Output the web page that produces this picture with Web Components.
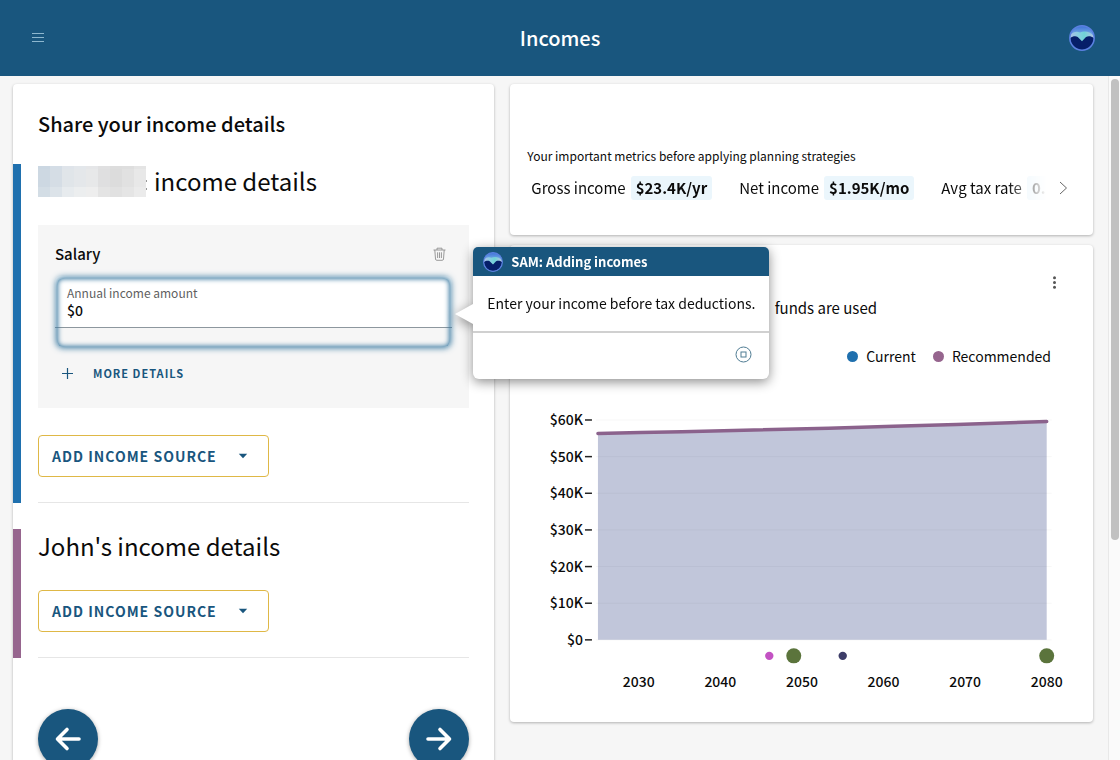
<!DOCTYPE html>
<html lang="en">
<head>
<meta charset="utf-8">
<meta name="viewport" content="width=device-width, initial-scale=1">
<title>Incomes</title>
<style>
  html, body {
    height: 100%;
    margin: 0;
  }

  body {
    background: #f6f6f6;
    color: #0b0b0b;
    font-family: "Noto Sans CJK SC", "Noto Sans", sans-serif;
    font-size: 14px;
    --blue: #19567e;
    --current: #1f70ae;
    --recommended: #96658e;
  }
</style>
</head>
<body>

<app-shell>
  <app-header slot="header" title="Incomes"></app-header>

  <card-box slot="left">
    <income-form>
      <income-section color="current" heading="income details" masked>
        <income-source name="Salary" label="Annual income amount" value="$0">
          <help-tip title="SAM: Adding incomes">Enter your income before tax deductions.</help-tip>
        </income-source>
      </income-section>
      <income-section color="recommended" heading="John's income details"></income-section>
    </income-form>
  </card-box>

  <card-box slot="right">
    <metrics-bar></metrics-bar>
  </card-box>
  <card-box slot="right">
    <funds-chart></funds-chart>
  </card-box>
</app-shell>

<script>
class AppShell extends HTMLElement {
  constructor() {
    super()
    this.attachShadow({ mode: 'open' }).innerHTML =
      /*html*/
      `
      <style>
        :host {
          display: flex;
          flex-direction: column;
          height: 100vh;
          overflow: hidden;
        }
        .body {
          display: flex;
          flex: 1;
          min-height: 0;
        }
        main {
          flex: 1;
          display: grid;
          grid-template-columns: minmax(0, 19fr) minmax(0, 23fr);
          align-items: start;
          gap: 16px;
          padding: 8px 15px 0 13px;
          min-width: 0;
        }
        .left {
          position: relative;
          z-index: 1;
        }
        .right {
          display: grid;
          grid-template-columns: minmax(0, 1fr);
          gap: 10px;
        }
        .rail {
          box-sizing: border-box;
          width: 12px;
          padding: 3px 1px;
          background: #fafafa;
          border-left: 1px solid #e8e8e8;
        }
        .thumb {
          height: 68%;
          margin-left: 1px;
          border-radius: 4px;
          background: #c1c1c1;
        }
      </style>
      <slot name="header"></slot>
      <div class="body">
        <main>
          <div class="left"><slot name="left"></slot></div>
          <div class="right"><slot name="right"></slot></div>
        </main>
        <div class="rail"><div class="thumb"></div></div>
      </div>
      `
  }
}
customElements.define('app-shell', AppShell)


// round wave logo, used in the header and in the help tip
class SamLogo extends HTMLElement {
  constructor() {
    super()
    this.attachShadow({ mode: 'open' }).innerHTML =
      /*html*/
      `
      <style>
        :host {
          display: block;
          width: 26px;
          height: 26px;
        }
        svg {
          display: block;
          width: 100%;
          height: 100%;
        }
      </style>
      <svg viewBox="0 0 26 26" aria-hidden="true">
        <defs>
          <linearGradient id="sky" x1="0" y1="0" x2="0" y2="1">
            <stop offset="0" stop-color="#3f72d8"/>
            <stop offset=".4" stop-color="#79b4e6"/>
          </linearGradient>
          <linearGradient id="wave" x1="0" y1="0" x2="1" y2="0">
            <stop offset="0" stop-color="#a9bfe8"/>
            <stop offset=".35" stop-color="#86cfe0"/>
            <stop offset=".6" stop-color="#6fd3d6"/>
            <stop offset="1" stop-color="#b4c2e2"/>
          </linearGradient>
        </defs>
        <circle cx="13" cy="13" r="12.200" fill="url(#sky)"/>
        <path d="M1.500 10C4.500 6.500 8 6 11 7.500 15 5.500 21 6 24.500 11V14L13 17 1.500 14Z" fill="url(#wave)"/>
        <path d="M1.200 13.200C3.500 11.300 6.500 10.800 8.700 12L13 16.300 17 12C19.500 10.800 22.500 11.300 24.800 13.200A11.800 11.800 0 0 1 1.200 13.200Z" fill="#061f69"/>
        <circle cx="13" cy="13" r="12.200" fill="none" stroke="#5a80e0" stroke-width="1.500"/>
      </svg>
      `
  }
}
customElements.define('sam-logo', SamLogo)


class AppHeader extends HTMLElement {
  connectedCallback() {
    this.attachShadow({ mode: 'open' }).innerHTML =
      /*html*/
      `
      <style>
        :host {
          display: block;
          background: var(--blue);
          color: #fff;
        }
        header {
          display: grid;
          grid-template-columns: 1fr auto 1fr;
          align-items: center;
          height: 76px;
          padding: 0 25px;
        }
        h1 {
          margin: 0;
          font-size: 20px;
          line-height: 28px;
          font-weight: 500;
        }
        button {
          display: block;
          padding: 6px;
          border: 0;
          background: none;
          cursor: pointer;
        }
        .account {
          justify-self: end;
          padding: 0;
        }
        svg {
          display: block;
        }
      </style>
      <header>
        <button aria-label="Menu">
          <svg width="14" height="14" viewBox="0 0 14 14" fill="none" stroke="#8db7cf">
            <path d="M1 2.500H13M1 6.500H13M1 10.500H13"/>
          </svg>
        </button>
        <h1>${this.getAttribute('title')}</h1>
        <button class="account" aria-label="Account"><sam-logo></sam-logo></button>
      </header>
      `
  }
}
customElements.define('app-header', AppHeader)


class CardBox extends HTMLElement {
  constructor() {
    super()
    this.attachShadow({ mode: 'open' }).innerHTML =
      /*html*/
      `
      <style>
        :host {
          display: block;
          background: #fff;
          border-radius: 4px;
          box-shadow: 0 1px 3px rgba(0, 0, 0, .28);
        }
      </style>
      <slot></slot>
      `
  }
}
customElements.define('card-box', CardBox)


class IncomeForm extends HTMLElement {
  constructor() {
    super()
    this.attachShadow({ mode: 'open' }).innerHTML =
      /*html*/
      `
      <style>
        :host {
          display: block;
          padding: 26px 0;
        }
        h2 {
          margin: 0 25px 26px;
          font-size: 20px;
          line-height: 28px;
          font-weight: 500;
        }
        .sections {
          display: grid;
          gap: 26px;
        }
        nav {
          display: flex;
          justify-content: space-between;
          margin: 51px 25px 0;
        }
        nav button {
          display: grid;
          place-items: center;
          width: 60px;
          height: 60px;
          padding: 0;
          border: 0;
          border-radius: 50%;
          background: var(--blue);
          box-shadow: 0 1px 4px rgba(0, 0, 0, .35);
          cursor: pointer;
        }
      </style>
      <h2>Share your income details</h2>
      <div class="sections"><slot></slot></div>
      <nav>
        <button aria-label="Back">
          <svg width="28" height="28" viewBox="0 0 28 28" fill="none" stroke="#fff" stroke-width="3.600" stroke-linecap="round" stroke-linejoin="round">
            <path d="M25 14H4M13 4.500 3.500 14 13 23.500"/>
          </svg>
        </button>
        <button aria-label="Next">
          <svg width="28" height="28" viewBox="0 0 28 28" fill="none" stroke="#fff" stroke-width="3.600" stroke-linecap="round" stroke-linejoin="round">
            <path d="M3 14H24M15 4.500 24.500 14 15 23.500"/>
          </svg>
        </button>
      </nav>
      `
  }
}
customElements.define('income-form', IncomeForm)


class IncomeSection extends HTMLElement {
  connectedCallback() {
    this.attachShadow({ mode: 'open' }).innerHTML =
      /*html*/
      `
      <style>
        :host {
          display: block;
          border-left: 8px solid var(--${this.getAttribute('color')});
          padding: 0 25px 0 17px;
        }
        h3 {
          display: flex;
          align-items: center;
          gap: 7px;
          margin: 0 0 27px;
          font-size: 24px;
          line-height: 34px;
          font-weight: 400;
        }
        ::slotted(*) {
          margin-bottom: 27px;
        }
        .add {
          display: flex;
          align-items: center;
          gap: 21px;
          height: 42px;
          padding: 0 20px 0 13px;
          border: 1px solid #dfb846;
          border-radius: 4px;
          background: #fff;
          color: var(--blue);
          font: 700 14px/20px "Noto Sans CJK SC", sans-serif;
          letter-spacing: 1px;
          cursor: pointer;
        }
        hr {
          height: 1px;
          margin: 25px 0 0;
          border: 0;
          background: #e6e6e6;
        }
      </style>
      <h3>${this.hasAttribute('masked') ? this.mask() : ''}${this.getAttribute('heading')}</h3>
      <slot></slot>
      <button class="add">ADD INCOME SOURCE
        <svg width="10" height="6" viewBox="0 0 10 6" fill="currentColor"><path d="M.8.800H9.200L5 5.200Z"/></svg>
      </button>
      <hr>
      `
  }

  // pixelated name
  mask() {
    const rows = [
      ['#cbd7e2', '#d4dde6', '#dfe4ea', '#e3e7eb', '#e5e6e8', '#e0e0e1', '#dddddd', '#dedede', '#e4e4e4'],
      ['#cdd8e2', '#d5dde5', '#e0e5e9', '#e4e7ea', '#e7e8e9', '#dfdfe0', '#dcdcdc', '#e1e1e1', '#e8e8e8'],
      ['#d3dde5', '#dce3e9', '#e7ebee', '#eceeef', '#eeeeee', '#e4e4e4', '#e1e1e1', '#e5e5e5', '#ebebeb']
    ]
    const y = [0, 3, 21, 31]
    let rects = ''
    rows.forEach((row, r) => {
      row.forEach((fill, c) => {
        rects += `<rect x="${c * 12}" y="${y[r]}" width="12" height="${y[r + 1] - y[r]}" fill="${fill}"/>`
      })
    })
    return `<svg width="109" height="31" viewBox="0 0 109 31" shape-rendering="crispEdges" aria-hidden="true">
      ${rects}<path d="M108 14h1v2h-1zM108 22h1v2h-1z" fill="#999"/></svg>`
  }
}
customElements.define('income-section', IncomeSection)


class IncomeSource extends HTMLElement {
  connectedCallback() {
    this.attachShadow({ mode: 'open' }).innerHTML =
      /*html*/
      `
      <style>
        :host {
          display: block;
          padding: 17px 17px 25px;
          background: #f6f6f6;
        }
        .top {
          display: flex;
          justify-content: space-between;
          align-items: center;
          padding-right: 6px;
        }
        h4 {
          margin: 0;
          font-size: 15px;
          line-height: 24px;
          font-weight: 500;
        }
        button {
          padding: 0;
          border: 0;
          background: none;
          cursor: pointer;
        }
        svg {
          display: block;
        }
        .field {
          position: relative;
          margin-top: 10px;
          height: 73px;
        }
        .box {
          border-bottom: 1px solid #8d979e;
          background: #fff;
          border-radius: 6px 6px 0 0;
          padding: 9px 12px 8px;
        }
        label {
          display: block;
          color: #5f5f5f;
          font-size: 12px;
          line-height: 16px;
        }
        input {
          display: block;
          width: 100%;
          height: 18px;
          padding: 0;
          border: 0;
          outline: 0;
          background: none;
          color: inherit;
          font: 500 14px/18px "Noto Sans CJK SC", sans-serif;
        }
        /* focus ring drawn over the whole field */
        .ring {
          position: absolute;
          inset: 2px;
          border-radius: 6px;
          box-shadow: 0 0 6px 1px #3d7ca3, inset 0 0 5px 1px #3d7ca3;
          pointer-events: none;
        }
        .more {
          display: flex;
          align-items: center;
          gap: 20px;
          margin-top: 14px;
          padding-left: 7px;
          color: var(--blue);
          font: 700 11px/20px "Noto Sans CJK SC", sans-serif;
          letter-spacing: 1px;
        }
      </style>
      <div class="top">
        <h4>${this.getAttribute('name')}</h4>
        <button aria-label="Delete">
          <svg width="13" height="14" viewBox="0 0 13 14" fill="none" stroke="#8e8e8e" stroke-width=".9" stroke-linejoin="round">
            <path d="M.500 3H12.500M4 3V1.200H9V3M1.800 3 2.500 12Q2.600 13.300 3.800 13.300H9.200Q10.400 13.300 10.500 12L11.200 3M4.600 5.300V11M6.500 5.300V11M8.400 5.300V11"/>
          </svg>
        </button>
      </div>
      <div class="field">
        <div class="box">
          <label for="amount">${this.getAttribute('label')}</label>
          <input id="amount" type="text" value="${this.getAttribute('value')}">
        </div>
        <div class="ring"></div>
        <slot></slot>
      </div>
      <button class="more">
        <svg width="11" height="11" viewBox="0 0 11 11" stroke="currentColor" stroke-width="1.200"><path d="M0 5.500H11M5.500 0V11"/></svg>
        MORE DETAILS
      </button>
      `
  }
}
customElements.define('income-source', IncomeSource)


class HelpTip extends HTMLElement {
  connectedCallback() {
    this.attachShadow({ mode: 'open' }).innerHTML =
      /*html*/
      `
      <style>
        :host {
          position: absolute;
          left: calc(100% + 21px);
          top: -29px;
          width: 296px;
          border-radius: 6px;
          background: #fff;
          filter: drop-shadow(0 3px 6px rgba(0, 0, 0, .45));
        }
        .arrow {
          position: absolute;
          right: 100%;
          top: 57px;
        }
        header {
          display: flex;
          align-items: center;
          gap: 8px;
          height: 29px;
          padding: 0 10px;
          border-radius: 5px 5px 0 0;
          background: var(--blue);
          color: #fff;
          font-size: 13px;
          line-height: 20px;
          font-weight: 700;
        }
        sam-logo {
          width: 20px;
          height: 20px;
        }
        p {
          margin: 0;
          padding: 17px 14px;
          font-size: 14px;
          line-height: 21px;
          white-space: nowrap;
        }
        footer {
          display: flex;
          justify-content: flex-end;
          padding: 13px 17px 16px;
          border-top: 2px solid #d0d0d0;
        }
        button {
          padding: 0;
          border: 0;
          background: none;
          cursor: pointer;
        }
        svg {
          display: block;
        }
      </style>
      <svg class="arrow" width="18" height="20" viewBox="0 0 18 20"><path d="M18 0V20L0 10Z" fill="#fff"/></svg>
      <header><sam-logo></sam-logo>${this.getAttribute('title')}</header>
      <p><slot></slot></p>
      <footer>
        <button aria-label="Stop tips">
          <svg width="17" height="17" viewBox="0 0 17 17" fill="none" stroke="#4f7c93">
            <circle cx="8.500" cy="8.500" r="7.500"/>
            <rect x="6" y="6" width="5" height="5"/>
          </svg>
        </button>
      </footer>
      `
  }
}
customElements.define('help-tip', HelpTip)


class MetricsBar extends HTMLElement {
  constructor() {
    super()
    this.attachShadow({ mode: 'open' }).innerHTML =
      /*html*/
      `
      <style>
        :host {
          display: block;
          padding: 62px 17px 35px;
        }
        p {
          margin: 0;
          font-size: 12px;
          line-height: 20px;
        }
        .row {
          display: flex;
          align-items: center;
          gap: 12px;
          margin-top: 10px;
          padding: 0 8px 0 4px;
        }
        .list {
          display: flex;
          flex: 1;
          gap: 27px;
          min-width: 0;
          white-space: nowrap;
          font-size: 15px;
          line-height: 24px;
          -webkit-mask-image: linear-gradient(to left, transparent, #000 40px);
          mask-image: linear-gradient(to left, transparent, #000 40px);
        }
        .item {
          display: flex;
          gap: 5px;
        }
        b {
          padding: 0 5px;
          border-radius: 3px;
          background: #ebf6fc;
          font-weight: 700;
        }
        button {
          padding: 0;
          border: 0;
          background: none;
          cursor: pointer;
        }
        svg {
          display: block;
        }
      </style>
      <p>Your important metrics before applying planning strategies</p>
      <div class="row">
        <div class="list">
          <div class="item">Gross income <b>$23.4K/yr</b></div>
          <div class="item">Net income <b>$1.95K/mo</b></div>
          <div class="item">Avg tax rate <b>0.</b></div>
        </div>
        <button aria-label="More metrics">
          <svg width="9" height="14" viewBox="0 0 9 14" fill="none" stroke="#666"><path d="M1 1 7.500 7 1 13"/></svg>
        </button>
      </div>
      `
  }
}
customElements.define('metrics-bar', MetricsBar)


class FundsChart extends HTMLElement {
  constructor() {
    super()
    this.attachShadow({ mode: 'open' }).innerHTML =
      /*html*/
      `
      <style>
        :host {
          display: block;
          padding: 29px 0 22px;
        }
        .menu {
          display: block;
          margin: 0 36px 0 auto;
          padding: 2px 0;
          border: 0;
          background: none;
          cursor: pointer;
        }
        .menu svg {
          display: block;
        }
        h2 {
          margin: 5px 216px 0 0;
          font-size: 15px;
          line-height: 24px;
          font-weight: 400;
          text-align: right;
        }
        .legend {
          display: flex;
          justify-content: flex-end;
          gap: 17px;
          margin: 26px 42px 0 0;
          font-size: 14px;
          line-height: 20px;
        }
        .legend span {
          display: flex;
          align-items: center;
          gap: 8px;
        }
        .legend i {
          width: 11px;
          height: 11px;
          border-radius: 50%;
        }
        .chart {
          display: block;
          width: 100%;
          margin-top: 34px;
        }
        text {
          font-size: 14px;
          font-weight: 500;
          fill: #0b0b0b;
        }
      </style>
      <button class="menu" aria-label="Chart options">
        <svg width="5" height="13" viewBox="0 0 5 13" fill="#555">
          <circle cx="2.500" cy="1.800" r="1.500"/><circle cx="2.500" cy="6.500" r="1.500"/><circle cx="2.500" cy="11.200" r="1.500"/>
        </svg>
      </button>
      <h2>funds are used</h2>
      <div class="legend">
        <span><i style="background: var(--current)"></i>Current</span>
        <span><i style="background: var(--recommended)"></i>Recommended</span>
      </div>
      ${this.chart()}
      `
  }

  chart() {
    const left = 88, right = 537, top = 20, bottom = 240
    const x = year => left + (year - 2025) * (right - left) / 55
    const y = k => bottom - k * (bottom - top) / 60

    let grid = ''
    let labels = ''
    for (let k = 0; k <= 60; k += 10) {
      grid += `<path d="M${left - 2} ${y(k)}H${right + 5}" stroke="#000" stroke-opacity=".04"/>`
      labels += `<path d="M75 ${y(k)}H82" stroke="#222" stroke-width="1.500"/>`
      labels += `<text x="73" y="${y(k) + 5}" text-anchor="end">$${k ? k + 'K' : 0}</text>`
    }
    for (let year = 2030; year <= 2080; year += 10) {
      labels += `<text x="${x(year)}" y="287" text-anchor="middle">${year}</text>`
    }

    const events = [[2046, 4.2, '#c352c3'], [2049, 7.5, '#5b743c'], [2055, 4.2, '#3d3d68'], [2080, 7.5, '#5b743c']]
    const dots = events.map(([year, r, fill]) => `<circle cx="${x(year)}" cy="256" r="${r}" fill="${fill}"/>`).join('')

    return `
      <svg class="chart" viewBox="0 0 583 300">
        <path d="M${left} 33.500Q${x(2055)} 28.500 ${right} 21.500V${bottom}H${left}Z" fill="#c1c6da"/>
        ${grid}
        <path d="M${left} 33.500Q${x(2055)} 28.500 ${right} 21.500" fill="none" stroke="#8b628c" stroke-width="3.500" stroke-linecap="round"/>
        ${labels}
        ${dots}
      </svg>`
  }
}
customElements.define('funds-chart', FundsChart)
</script>
</body>
</html>
